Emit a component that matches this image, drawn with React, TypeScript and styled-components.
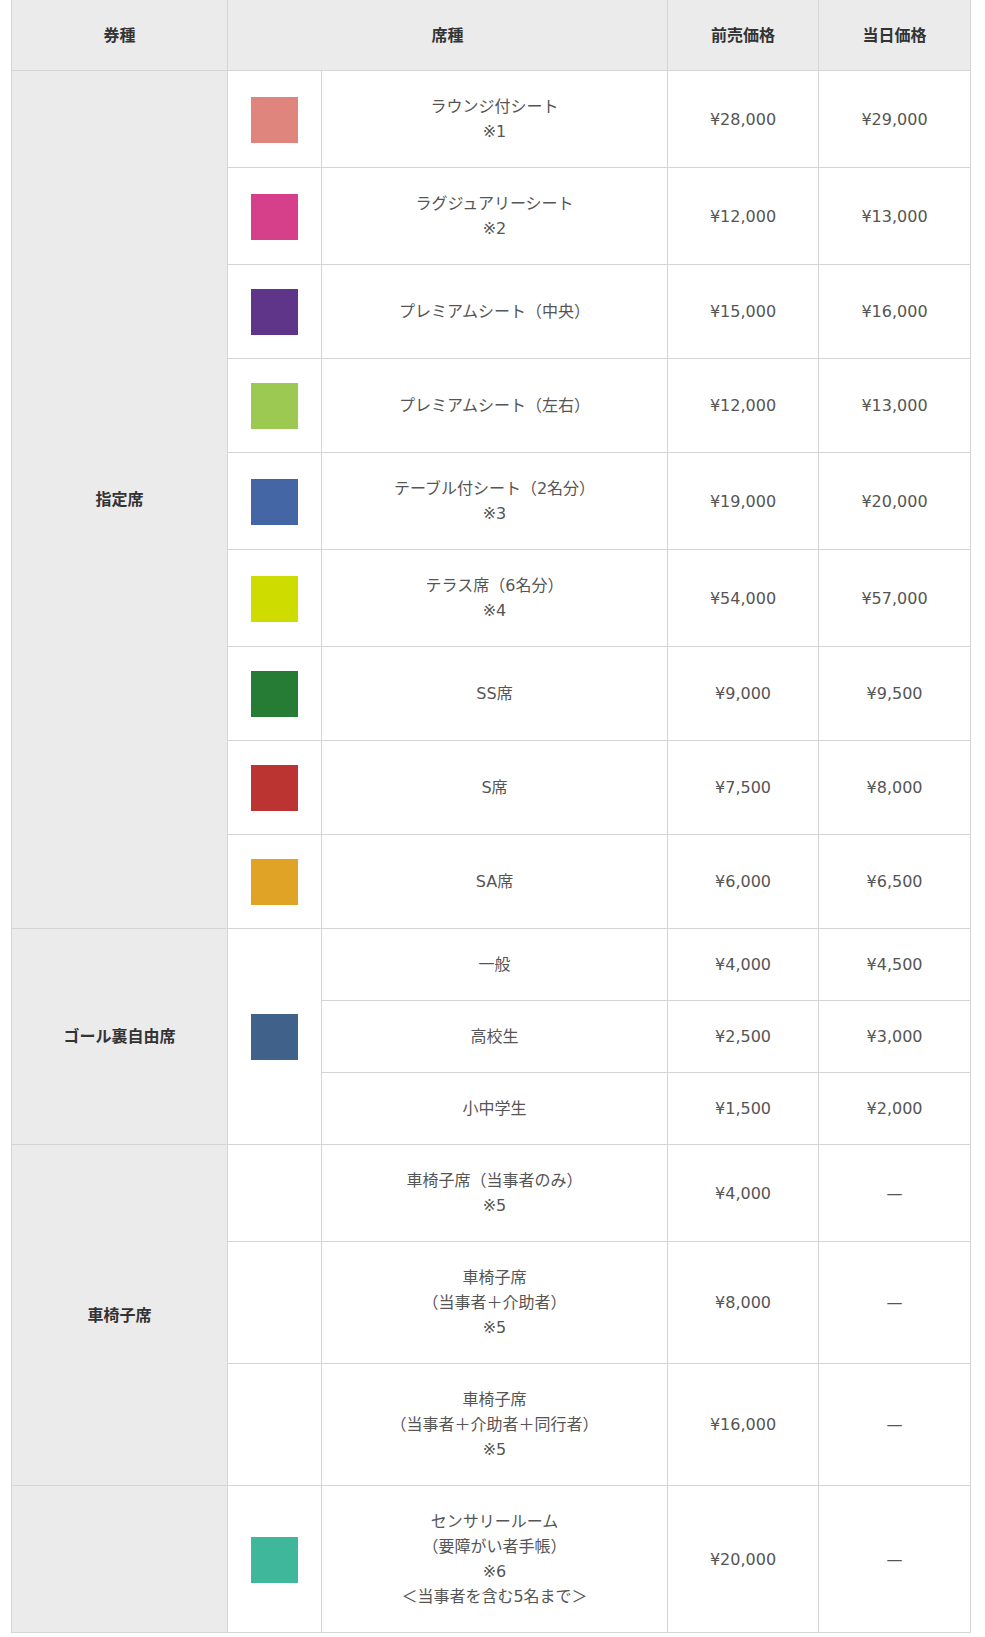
import React from 'react'
import styled, {createGlobalStyle} from 'styled-components'

const GlobalStyle = createGlobalStyle`
  body {
    margin: 0;
    background: #ffffff;
    font-family: "DejaVu Sans", "Noto Sans CJK JP", sans-serif;
  }
`

const Wrapper = styled.div`
  padding: 0 0 0 11px;
`

const Table = styled.table`
  width: 959px;
  table-layout: fixed;
  border-collapse: collapse;
  font-family: "DejaVu Sans", "Noto Sans CJK JP", sans-serif;
  font-size: 16px;
  line-height: 25px;
  color: #555555;
`

const HeadCell = styled.th`
  background: #ebebeb;
  color: #333333;
  font-weight: bold;
  text-align: center;
  padding: 23px 10px 22px;
  border: 1px solid #d5d5d5;
  border-top: none;
`

const TypeCell = styled.th`
  background: #ebebeb;
  color: #333333;
  font-weight: bold;
  text-align: center;
  vertical-align: middle;
  padding: 23px 10px;
  border: 1px solid #d5d5d5;
`

const SwatchCell = styled.td`
  padding: 24px 0 23px;
  border: 1px solid #d5d5d5;
  vertical-align: middle;
`

const Swatch = styled.div<{ $color: string }>`
  display: block;
  width: 47px;
  height: 46px;
  margin: 0 auto;
  background: ${(props) => props.$color};
`

const NameCell = styled.td`
  padding: 23px 10px;
  border: 1px solid #d5d5d5;
  text-align: center;
  vertical-align: middle;
`

const PriceCell = styled.td`
  padding: 23px 10px;
  border: 1px solid #d5d5d5;
  text-align: center;
  vertical-align: middle;
`

interface Seat {
    color?: string
    lines: string[]
    advance: string
    sameDay: string
}

const reserved: Seat[] = [
    {color: '#e0857d', lines: ['ラウンジ付シート', '※1'], advance: '¥28,000', sameDay: '¥29,000'},
    {color: '#d6408b', lines: ['ラグジュアリーシート', '※2'], advance: '¥12,000', sameDay: '¥13,000'},
    {color: '#5e3588', lines: ['プレミアムシート（中央）'], advance: '¥15,000', sameDay: '¥16,000'},
    {color: '#9bc952', lines: ['プレミアムシート（左右）'], advance: '¥12,000', sameDay: '¥13,000'},
    {color: '#4466a5', lines: ['テーブル付シート（2名分）', '※3'], advance: '¥19,000', sameDay: '¥20,000'},
    {color: '#cfdc00', lines: ['テラス席（6名分）', '※4'], advance: '¥54,000', sameDay: '¥57,000'},
    {color: '#267b35', lines: ['SS席'], advance: '¥9,000', sameDay: '¥9,500'},
    {color: '#bc3431', lines: ['S席'], advance: '¥7,500', sameDay: '¥8,000'},
    {color: '#e0a326', lines: ['SA席'], advance: '¥6,000', sameDay: '¥6,500'},
]

const goal: Seat[] = [
    {lines: ['一般'], advance: '¥4,000', sameDay: '¥4,500'},
    {lines: ['高校生'], advance: '¥2,500', sameDay: '¥3,000'},
    {lines: ['小中学生'], advance: '¥1,500', sameDay: '¥2,000'},
]

const wheelchair: Seat[] = [
    {lines: ['車椅子席（当事者のみ）', '※5'], advance: '¥4,000', sameDay: '—'},
    {lines: ['車椅子席', '（当事者＋介助者）', '※5'], advance: '¥8,000', sameDay: '—'},
    {lines: ['車椅子席', '（当事者＋介助者＋同行者）', '※5'], advance: '¥16,000', sameDay: '—'},
]

const sensory: Seat = {
    color: '#3fb79a',
    lines: ['センサリールーム', '（要障がい者手帳）', '※6', '＜当事者を含む5名まで＞'],
    advance: '¥20,000',
    sameDay: '—',
}

function Name({lines}: { lines: string[] }) {
    return (
        <NameCell>
            {lines.map((line, i) => (
                <React.Fragment key={i}>
                    {i > 0 && <br/>}
                    {line}
                </React.Fragment>
            ))}
        </NameCell>
    )
}

function App() {
    return (
        <Wrapper>
            <GlobalStyle/>
            <Table>
                <colgroup>
                    <col style={{width: 216}}/>
                    <col style={{width: 94}}/>
                    <col style={{width: 346}}/>
                    <col style={{width: 151}}/>
                    <col style={{width: 152}}/>
                </colgroup>
                <thead>
                <tr>
                    <HeadCell>券種</HeadCell>
                    <HeadCell colSpan={2}>席種</HeadCell>
                    <HeadCell>前売価格</HeadCell>
                    <HeadCell>当日価格</HeadCell>
                </tr>
                </thead>
                <tbody>
                {reserved.map((seat, i) => (
                    <tr key={'r' + i}>
                        {i === 0 && <TypeCell rowSpan={reserved.length}>指定席</TypeCell>}
                        <SwatchCell><Swatch $color={seat.color!}/></SwatchCell>
                        <Name lines={seat.lines}/>
                        <PriceCell>{seat.advance}</PriceCell>
                        <PriceCell>{seat.sameDay}</PriceCell>
                    </tr>
                ))}
                {goal.map((seat, i) => (
                    <tr key={'g' + i}>
                        {i === 0 && <TypeCell rowSpan={goal.length}>ゴール裏自由席</TypeCell>}
                        {i === 0 && <SwatchCell rowSpan={goal.length}><Swatch $color="#40628a"/></SwatchCell>}
                        <Name lines={seat.lines}/>
                        <PriceCell>{seat.advance}</PriceCell>
                        <PriceCell>{seat.sameDay}</PriceCell>
                    </tr>
                ))}
                {wheelchair.map((seat, i) => (
                    <tr key={'w' + i}>
                        {i === 0 && <TypeCell rowSpan={wheelchair.length}>車椅子席</TypeCell>}
                        <SwatchCell/>
                        <Name lines={seat.lines}/>
                        <PriceCell>{seat.advance}</PriceCell>
                        <PriceCell>{seat.sameDay}</PriceCell>
                    </tr>
                ))}
                <tr>
                    <TypeCell/>
                    <SwatchCell><Swatch $color={sensory.color!}/></SwatchCell>
                    <Name lines={sensory.lines}/>
                    <PriceCell>{sensory.advance}</PriceCell>
                    <PriceCell>{sensory.sameDay}</PriceCell>
                </tr>
                </tbody>
            </Table>
        </Wrapper>
    )
}

export default App
